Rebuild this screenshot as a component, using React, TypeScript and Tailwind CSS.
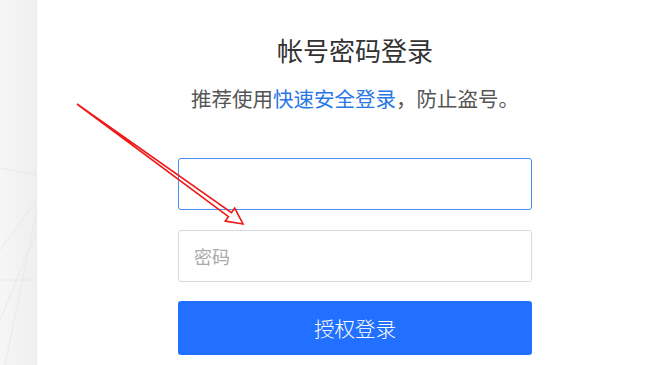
export default function App() {
  return (
    <div
      className="relative flex h-[365px] w-[650px] overflow-hidden bg-white"
      style={{ fontFamily: '"Noto Sans CJK SC", "Noto Sans", sans-serif' }}
    >
      {/* left background strip */}
      <div className="relative h-full w-[37px] shrink-0 border-r border-[#ececec] bg-gradient-to-r from-[#f6f6f6] to-[#efefef]">
        <svg className="absolute inset-0" width="37" height="365" viewBox="0 0 37 365">
          <g stroke="#e6e6e6" strokeWidth="0.8" fill="none">
            <line x1="0" y1="168" x2="37" y2="175" />
            <line x1="0" y1="250" x2="37" y2="200" />
            <line x1="0" y1="280" x2="37" y2="280" />
            <line x1="5" y1="365" x2="37" y2="210" />
            <line x1="0" y1="320" x2="37" y2="230" />
          </g>
        </svg>
      </div>

      <div className="ml-[141px] flex w-[354px] flex-col pt-[33px]">
        <h1 className="text-center text-[26px] leading-[34px] text-[#333]">帐号密码登录</h1>
        <p className="mt-[16px] whitespace-nowrap text-center text-[20.5px] leading-[30px] text-[#555]">
          推荐使用<span className="text-[#2a77e6]">快速安全登录</span>，防止盗号。
        </p>
        <div className="mt-[45px] h-[52px] rounded-[3px] border border-[#4a8ef0] bg-white" />
        <div className="mt-[20px] flex h-[52px] items-center rounded-[3px] border border-[#d9d9d9] bg-white pl-[15px] text-[18px] text-[#aaa]">
          密码
        </div>
        <button className="mt-[19px] h-[54px] rounded-[3px] bg-[#2170ff] text-[20.5px] font-light text-white">
          授权登录
        </button>
      </div>

      {/* red annotation arrow */}
      <svg className="pointer-events-none absolute inset-0" width="650" height="365" viewBox="0 0 650 365">
        <polygon
          points="77,104 231.5,212.6 234.7,208.1 243,224 225.3,221.1 228.5,216.6"
          fill="none"
          stroke="#f01818"
          strokeWidth="1.6"
          strokeLinejoin="miter"
        />
      </svg>
    </div>
  );
}
